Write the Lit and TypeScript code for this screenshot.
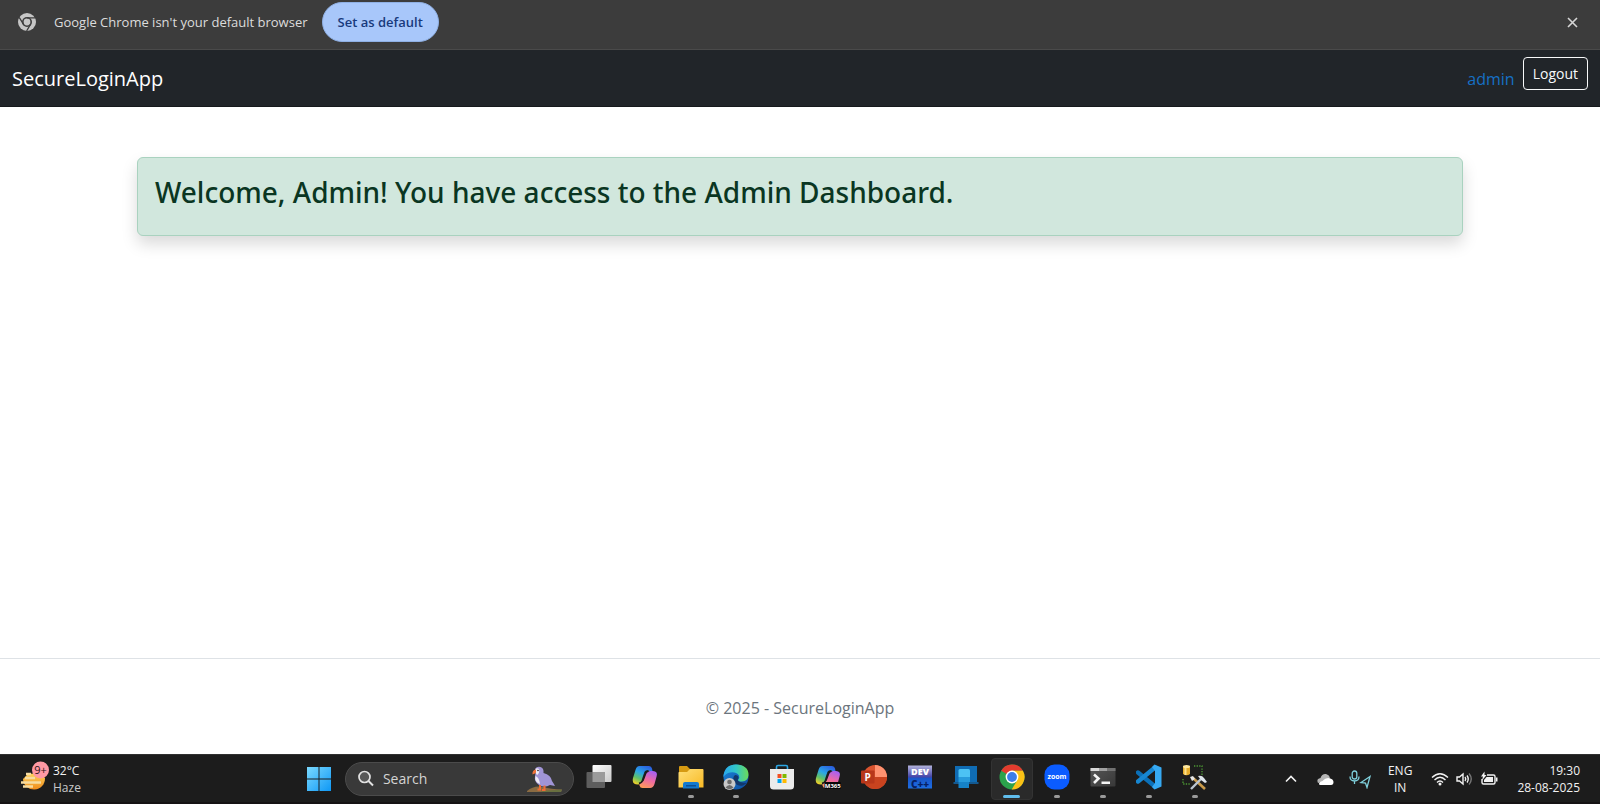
import { LitElement, html, css, svg, nothing, TemplateResult } from "lit";
import { customElement, property } from "lit/decorators.js";
import { classMap } from "lit/directives/class-map.js";

const reset = css`
  * {
    box-sizing: border-box;
  }
  button,
  input {
    font: inherit;
    margin: 0;
  }
  svg {
    display: block;
  }
`;

@customElement("default-browser-bar")
class DefaultBrowserBar extends LitElement {
  static styles = [
    reset,
    css`
      :host {
        display: block;
        background: #3c3c3c;
        color: #dcdcdc;
        border-bottom: 1px solid #4a4a4a;
      }
      .bar {
        display: flex;
        align-items: center;
        padding: 2px 18px 7px;
        font-size: 13px;
        line-height: 20px;
      }
      .message {
        margin: 0 14px 0 18px;
      }
      .set {
        height: 40px;
        padding: 0 15px;
        border: 1px solid #8fb0e4;
        border-radius: 20px;
        background: #a8c7fa;
        color: #183a7c;
        font-weight: 600;
      }
      .close {
        margin-left: auto;
        padding: 4px;
        border: 0;
        background: none;
        color: #d6d6d6;
      }
    `,
  ];
  render() {
    return html`<div class="bar">
      <svg width="18" height="18" viewBox="0 0 18 18" aria-hidden="true">
        <circle cx="9" cy="9" r="9" fill="#c6c6c6" />
        <circle cx="9" cy="9" r="5" fill="#3c3c3c" />
        <circle cx="9" cy="9" r="3.400" fill="#c6c6c6" />
        <path d="M9 4.800H17.400M5.400 11.200L1.200 4.400M12.600 11.200L8.600 18" stroke="#3c3c3c" stroke-width="1.300" />
      </svg>
      <span class="message">Google Chrome isn't your default browser</span>
      <button class="set" type="button">Set as default</button>
      <button class="close" type="button" aria-label="Close">
        <svg width="11" height="11" viewBox="0 0 11 11">
          <path d="M1 1L10 10M10 1L1 10" stroke="currentColor" stroke-width="1.600" />
        </svg>
      </button>
    </div>`;
  }
}

@customElement("site-nav")
class SiteNav extends LitElement {
  static styles = [
    reset,
    css`
      :host {
        display: block;
        background: #212529;
      }
      .nav {
        display: flex;
        align-items: flex-start;
        height: 57px;
        padding: 7px 12px 0;
        border-bottom: 1px solid #16191c;
      }
      a {
        text-decoration: none;
      }
      .brand {
        margin-right: auto;
        padding-top: 7px;
        color: #fff;
        font-size: 20px;
        line-height: 30px;
      }
      .user {
        padding: 9px 8px 0 0;
        color: #1670c4;
        font-size: 16px;
        line-height: 26px;
      }
      .logout {
        height: 33px;
        padding: 0 9px;
        border: 1px solid #f8f9fa;
        border-radius: 4px;
        background: none;
        color: #f8f9fa;
        font-size: 14px;
        line-height: 22px;
      }
    `,
  ];
  render() {
    return html`<nav class="nav">
      <a class="brand" href="#">SecureLoginApp</a>
      <a class="user" href="#">admin</a>
      <button class="logout" type="button">Logout</button>
    </nav>`;
  }
}

type App = { name: string; art: TemplateResult; running?: boolean; active?: boolean };

const copilot = svg`
  <path d="M7.500 2H17Q19.500 2 20 4.500L20.500 7H15.500Q13.500 7 13 9L10.500 17Q9.500 20.500 6 20.500Q-0.500 20.500 1 14L3.500 6Q4.500 2 7.500 2Z" fill="url(#cpa)"/>
  <path d="M18 24H10.500Q8 24 7.500 21.500L7 19Q10.500 19.500 12 16L14.500 9.500Q15.300 7 18 7H21Q26 7.500 24.700 12L22.500 20Q21.300 24 18 24Z" fill="url(#cpb)"/>
  <path d="M16.500 7Q13.500 7 12.800 9.500L10.500 16.500Q9.500 19 7 19.500" fill="none" stroke="#1c1c1c" stroke-width="1.800"/>`;
const copilotDefs = svg`
  <defs>
    <linearGradient id="cpa" x1="0.7" y1="0" x2="0.2" y2="1"><stop stop-color="#2b62e0"/><stop offset="0.4" stop-color="#2aa5e8"/><stop offset="0.7" stop-color="#5fc26a"/><stop offset="1" stop-color="#f4cf26"/></linearGradient>
    <linearGradient id="cpb" x1="0.7" y1="0" x2="0.3" y2="1"><stop stop-color="#a660f2"/><stop offset="0.5" stop-color="#ee6aa4"/><stop offset="1" stop-color="#ff9a5a"/></linearGradient>
  </defs>`;

const APPS: App[] = [
  {
    name: "Task View",
    art: svg`<defs><linearGradient id="tv" x2="1" y2="1"><stop stop-color="#fff"/><stop offset="1" stop-color="#c9c9c9"/></linearGradient></defs>
      <rect x="6.500" y="1" width="19" height="17" rx="1" fill="url(#tv)"/>
      <rect x="0.500" y="8" width="18.500" height="16" rx="1" fill="#5e5e5e"/>
      <path d="M6.500 8H19V18H6.500Z" fill="#9b9b9b"/>`,
  },
  { name: "Copilot", art: svg`${copilotDefs}${copilot}` },
  {
    name: "File Explorer",
    running: true,
    art: svg`<defs><linearGradient id="fe" x2="1" y2="1"><stop stop-color="#ffe07a"/><stop offset="1" stop-color="#f8b924"/></linearGradient></defs>
      <path d="M1 3Q1 2 2 2H9L12 5H24Q25 5 25 6V12H1Z" fill="#d69a12"/>
      <path d="M1 8H9L12 5H24.500Q25.500 5 25.500 6V23.500H0.500V8.500Z" fill="url(#fe)"/>
      <path d="M5 24.500V20Q5 18 7 18H19Q21 18 21 20V24.500Z" fill="#1379cf"/>
      <rect x="8" y="21" width="10" height="1.500" fill="#0b4f94"/>`,
  },
  {
    name: "Microsoft Edge",
    running: true,
    art: svg`<defs>
        <linearGradient id="eg" x2="1"><stop stop-color="#2aa7ee"/><stop offset="0.5" stop-color="#32c7c8"/><stop offset="1" stop-color="#6cdc58"/></linearGradient>
        <linearGradient id="eb" x2="1" y2="1"><stop stop-color="#1c86dc"/><stop offset="1" stop-color="#0c4a9c"/></linearGradient>
      </defs>
      <circle cx="13" cy="13" r="12.500" fill="url(#eb)"/>
      <path d="M0.500 11.500Q2 0.500 13 0.500Q25.500 1 25.500 11Q25 17 19 17.500Q15 17.500 15 16Q17 14 16 11.500Q13 7.500 7 8.500Q3 9 0.500 13Z" fill="url(#eg)"/>
      <path d="M12 11Q9 14 11 18Q14 22.500 20 21.500L24 19Q20 19 17 18Q13.500 16.500 15.500 14Q15.500 11 12 11Z" fill="#12386c"/>
      <circle cx="6.500" cy="20" r="6" fill="#c8c8c8"/><circle cx="6.500" cy="18" r="2.300" fill="#6b6b6b"/><path d="M2.500 23.500Q6.500 18.500 10.500 23.500Q6.500 27 2.500 23.500Z" fill="#6b6b6b"/>`,
  },
  {
    name: "Microsoft Store",
    art: svg`<path d="M7.500 6V3Q7.500 1.500 9 1.500H17Q18.500 1.500 18.500 3V6" fill="none" stroke="#2ba6e3" stroke-width="1.600"/>
      <path d="M1 5H25V22Q25 25.500 21.500 25.500H4.500Q1 25.500 1 22Z" fill="#ececec"/>
      <path d="M8.500 10H12.500V14H8.500Z" fill="#f25022"/><path d="M13.500 10H17.500V14H13.500Z" fill="#7fba00"/>
      <path d="M8.500 15H12.500V19H8.500Z" fill="#00a4ef"/><path d="M13.500 15H17.500V19H13.500Z" fill="#ffb900"/>`,
  },
  {
    name: "Microsoft 365 Copilot",
    art: svg`${copilotDefs}${copilot}<rect x="9.500" y="18" width="16.500" height="7" rx="1" fill="#080808"/>
      <text x="17.700" y="23.700" font-size="6" font-weight="700" text-anchor="middle" fill="#fff">M365</text>`,
  },
  {
    name: "PowerPoint",
    art: svg`<circle cx="14" cy="13" r="12" fill="#d9532f"/>
      <path d="M14 1A12 12 0 0 1 26 13H14Z" fill="#ff9270"/><path d="M2 13H26A12 12 0 0 1 2 13Z" fill="#c9431f"/>
      <rect x="0" y="6.500" width="13.500" height="13" rx="1" fill="#b8371a"/>
      <text x="6.700" y="16.600" font-size="10" font-weight="700" text-anchor="middle" fill="#fff">P</text>`,
  },
  {
    name: "Dev-C++",
    art: svg`<defs><linearGradient id="dv" x2="0" y2="1"><stop stop-color="#b3b3dc"/><stop offset="0.500" stop-color="#4545a8"/><stop offset="0.550" stop-color="#1a56c8"/><stop offset="1" stop-color="#1d6ee4"/></linearGradient></defs>
      <rect x="1" y="1.500" width="24" height="23" fill="url(#dv)"/>
      <text x="13" y="10.500" font-size="9" font-weight="800" text-anchor="middle" fill="#fff">DEV</text>
      <text x="13" y="24" font-size="10" font-weight="800" text-anchor="middle" fill="#071f63">C++</text>`,
  },
  {
    name: "Remote Desktop",
    art: svg`<rect x="2" y="2" width="22" height="16" fill="#0f6cb4"/><path d="M0.500 18H25.500V20H0.500Z" fill="#14598f"/>
      <path d="M5.500 6.500Q5.500 5 7 5H15.500Q17 5 17 6.500V13H5.500Z" fill="#4cc2f4"/>
      <path d="M5.500 13H17V18H5.500Z" fill="#279bdc"/><path d="M5.500 18H16V24H5.500Z" fill="#1683c8"/>`,
  },
  {
    name: "Google Chrome",
    running: true,
    active: true,
    art: svg`<circle cx="13" cy="13" r="12.500" fill="#2ba24c"/>
      <path d="M13 13L2.200 6.700A12.500 12.500 0 0 1 23.900 6.800H13Z" fill="#e33b2e"/>
      <path d="M13 6.800H23.900A12.500 12.500 0 0 1 12.700 25.500L18.400 16Z" fill="#fbc116"/>
      <circle cx="13" cy="13" r="6.400" fill="#fff"/><circle cx="13" cy="13" r="4.900" fill="#3b7de9"/>`,
  },
  {
    name: "Zoom",
    running: true,
    art: svg`<rect x="0.500" y="0.500" width="25" height="25" rx="10" fill="#0b5cff"/>
      <text x="13" y="15" font-size="7" font-weight="700" text-anchor="middle" fill="#fff">zoom</text>`,
  },
  {
    name: "Terminal",
    running: true,
    art: svg`<defs><linearGradient id="tm" x2="1" y2="1"><stop stop-color="#565656"/><stop offset="1" stop-color="#383838"/></linearGradient></defs>
      <rect x="0.500" y="4" width="25" height="18.500" rx="1" fill="url(#tm)"/>
      <path d="M0.500 4H9V7H0.500Z" fill="#d8d8d8"/><path d="M9 4H17V7H9Z" fill="#a0a0a0"/><path d="M17 4H25.500V7H17Z" fill="#727272"/>
      <path d="M4 10.500L8.500 14.500L4 19" fill="none" stroke="#f4f4f4" stroke-width="2.600"/><path d="M11.500 17.500H20V20H11.500Z" fill="#f4f4f4"/>`,
  },
  {
    name: "Visual Studio Code",
    running: true,
    art: svg`<path d="M2 8.500L19 22.500" stroke="#0b70b8" stroke-width="4.400" stroke-linecap="round"/>
      <path d="M2 17.500L19 3.500" stroke="#1787d2" stroke-width="4.400" stroke-linecap="round"/>
      <path d="M18.500 0.500L25.500 3.500V22.500L18.500 25.500L16 23L19 19V7L16 3Z" fill="#36a9f2"/>`,
  },
  {
    name: "SQL Server Management Studio",
    running: true,
    art: svg`<path d="M1 2.500H8V10Q4.500 12.500 1 10Z" fill="#e6ad2c"/><path d="M2.500 3H4.500V11H2.500Z" fill="#fbe08a"/><ellipse cx="4.500" cy="2.500" rx="3.500" ry="1.500" fill="#ffe9a0"/>
      <path d="M12 2H20V12M1 15V20H8" fill="none" stroke="#4d9a34" stroke-width="1.300" stroke-dasharray="1.300 1.300"/>
      <path d="M11 14L23 25" stroke="#c99a4a" stroke-width="2.600"/><path d="M9 25L20 14" stroke="#b9c4d0" stroke-width="2.400"/>
      <path d="M8 13L11 12L13 15L10 17Z" fill="#e6e6e6"/><path d="M16 12Q20 11 22 14L25 18L23 19L19 16Z" fill="#dfe5ec"/>`,
  },
];

@customElement("task-bar")
class TaskBar extends LitElement {
  @property({ attribute: false }) apps: App[] = APPS;
  static styles = [
    reset,
    css`
      :host {
        display: block;
        background: #1c1c1c;
        color: #f2f2f2;
        font-size: 12px;
        line-height: 17px;
      }
      .bar {
        display: flex;
        align-items: stretch;
        height: 50px;
        padding: 0 20px;
        border-top: 1px solid #303030;
        border-bottom: 2px solid #151214;
      }
      button {
        border: 0;
        padding: 0;
        background: none;
        color: inherit;
      }
      .weather {
        display: flex;
        align-items: center;
        gap: 4px;
        text-align: left;
        margin-right: auto;
      }
      .haze {
        color: #c9c9c9;
      }
      .middle {
        display: flex;
        align-items: center;
        margin-right: 65px;
      }
      .start {
        margin-right: 13px;
      }
      .search {
        display: flex;
        align-items: center;
        width: 229px;
        height: 34px;
        padding: 0 11px;
        border: 1px solid #4b4b4b;
        border-radius: 17px;
        background: #393939;
      }
      .field {
        flex: 1;
        min-width: 0;
        margin-left: 9px;
        padding: 0;
        border: 0;
        outline: 0;
        background: none;
        color: #d4d4d4;
        font-size: 14px;
        line-height: 20px;
      }
      .field::placeholder {
        color: #d4d4d4;
        opacity: 1;
      }
      .apps {
        display: grid;
        grid-auto-flow: column;
        grid-auto-columns: 1fr;
        width: 642px;
        margin-left: 2px;
      }
      .app {
        display: grid;
        grid-template-rows: 36px 3px;
        justify-items: center;
        align-items: center;
        justify-self: center;
        width: 42px;
        height: 42px;
        border: 1px solid transparent;
        border-radius: 4px;
      }
      .active {
        background: #2a2a2a;
        border-color: #333;
      }
      .mark {
        width: 6px;
        height: 3px;
        border-radius: 2px;
        background: #9a9a9a;
      }
      .active .mark {
        width: 17px;
        background: #60bdec;
      }
      .tray {
        display: flex;
        align-items: center;
      }
      .onedrive {
        margin-left: 18px;
      }
      .mic {
        margin-left: 15px;
      }
      .lang {
        margin-left: 16px;
        text-align: center;
        font-size: 12px;
      }
      .status {
        display: flex;
        align-items: center;
        gap: 7px;
        margin: 0 19px 0 19px;
      }
      .clock {
        text-align: right;
      }
    `,
  ];
  render() {
    return html`<footer class="bar">
      <button class="weather" type="button">
        <svg width="29" height="36" viewBox="0 0 29 36" aria-hidden="true">
          <defs><linearGradient id="sun" x2="0" y2="1"><stop stop-color="#ffd45c" /><stop offset="1" stop-color="#ef8b1b" /></linearGradient></defs>
          <path d="M3 18A11 11 0 0 0 25 17L20 12L8 13Z" fill="url(#sun)" />
          <path d="M6 13H11M5 17H15M1 21.500H21M3 25.500H13" stroke="#f6dca0" stroke-width="2.500" />
          <circle cx="20.500" cy="9" r="8.500" fill="#ff99a4" />
          <text x="20.500" y="13" font-size="11" text-anchor="middle" fill="#2b1215">9+</text>
        </svg>
        <span>32°C<br /><span class="haze">Haze</span></span>
      </button>
      <div class="middle">
        <button class="start" type="button" aria-label="Start">
          <svg width="26" height="26" viewBox="0 0 26 26">
            <defs><linearGradient id="win" gradientUnits="userSpaceOnUse" x2="26" y2="26"><stop stop-color="#7fdcff" /><stop offset="1" stop-color="#0a95f5" /></linearGradient></defs>
            <path d="M1 1H12.500V12.500H1ZM13.500 1H25V12.500H13.500ZM1 13.500H12.500V25H1ZM13.500 13.500H25V25H13.500Z" fill="url(#win)" />
          </svg>
        </button>
        <label class="search">
          <svg width="17" height="17" viewBox="0 0 17 17" aria-hidden="true">
            <circle cx="7.500" cy="7" r="5.500" fill="#585858" stroke="#e2e2e2" stroke-width="1.700" />
            <path d="M11.500 11L16 15.500" stroke="#e2e2e2" stroke-width="2" />
          </svg>
          <input class="field" type="text" placeholder="Search" aria-label="Search" />
          <svg width="36" height="28" viewBox="0 0 36 28" aria-hidden="true">
            <path d="M1 26Q8 20 17 22Q25 24 36 24.500L35 27H1Z" fill="#8a6b42" />
            <path d="M17 26Q26 25 36 24.500L35 27H15Z" fill="#687040" />
            <path d="M9 4Q11 1 14.500 2Q18 3 17.500 8Q25 10 26 16Q28 19 29 21L24 20Q18 23 13 20Q8 17 9 11Q10 8 9 4Z" fill="#a094d6" />
            <path d="M9.500 4Q11 2.500 13 4Q14 8 11 10Q9 8 9.500 4ZM9.500 11Q13 12 14 19Q8 17 9.500 11Z" fill="#eeeaf6" />
            <path d="M10 4.500Q6 5 6.500 9.500L10 8Z" fill="#f0733c" />
            <circle cx="12" cy="5.500" r="0.800" fill="#222" />
            <path d="M14 20V24.500H11.500M18.500 20.500V25H16" stroke="#ef6b34" stroke-width="2" fill="none" />
          </svg>
        </label>
        <div class="apps">
          ${this.apps.map(
            (app) => html`<button class=${classMap({ app: true, active: !!app.active })} type="button" aria-label=${app.name}>
              <svg width="26" height="26" viewBox="0 0 26 26">${app.art}</svg>
              ${app.running ? html`<span class="mark"></span>` : nothing}
            </button>`
          )}
        </div>
      </div>
      <div class="tray">
        <button type="button" aria-label="Show hidden icons">
          <svg width="16" height="16" viewBox="0 0 16 16"><path d="M3 10.500L8 5.500L13 10.500" fill="none" stroke="#f2f2f2" stroke-width="1.600" /></svg>
        </button>
        <button class="onedrive" type="button" aria-label="OneDrive">
          <svg width="17" height="16" viewBox="0 0 17 16">
            <path d="M1 12Q-1 8 3.500 7Q5 2.500 9 3Q12 3.500 13 6.500L8 10Z" fill="#b4b4b4" />
            <path d="M2 13Q2 11 5.500 10Q8 7 12 7Q16.500 8 16.500 11Q16.500 14 14 14H3.500Q2 14 2 13Z" fill="#fff" />
          </svg>
        </button>
        <button class="mic" type="button" aria-label="Microphone and location in use">
          <svg width="23" height="20" viewBox="0 0 23 20">
            <g fill="none" stroke="#7fd0dc" stroke-width="1.300">
              <rect x="3.200" y="2" width="4.600" height="8" rx="2.300" />
              <path d="M1 7.500Q1 12 5.500 12Q10 12 10 7.500M5.500 12V15" />
              <path d="M21 7.500L12 13.500L16.500 14L18 18.500Z" />
            </g>
          </svg>
        </button>
        <button class="lang" type="button">ENG<br />IN</button>
        <button class="status" type="button" aria-label="Network, volume and battery">
          <svg width="18" height="16" viewBox="0 0 18 16">
            <g fill="none" stroke="#f2f2f2" stroke-width="1.400">
              <path d="M1 6.500Q9 -1 17 6.500M3.500 9Q9 3.500 14.500 9M6 11.500Q9 8.500 12 11.500" />
            </g>
            <circle cx="9" cy="13" r="1.500" fill="#f2f2f2" />
          </svg>
          <svg width="17" height="16" viewBox="0 0 17 16">
            <g fill="none" stroke="#f2f2f2" stroke-width="1.400">
              <path d="M1 6H3.500L7 3V13L3.500 10H1Z" />
              <path d="M9 6Q10.500 8 9 10M11 4.500Q13.500 8 11 11.500" />
              <path d="M13 2.500Q17.500 8 13 13.500" stroke="#777" />
            </g>
          </svg>
          <svg width="18" height="16" viewBox="0 0 18 16">
            <path d="M7 4H13.500Q15 4 15 5.500V11.500Q15 13 13.500 13H3.500Q2 13 2 11.500V8" fill="none" stroke="#f2f2f2" stroke-width="1.400" />
            <path d="M6.500 6H13V11H4V9Z" fill="#f2f2f2" /><path d="M16 6.500H17.500V10.500H16Z" fill="#f2f2f2" />
            <path d="M4.500 0.500L1 5.500H3L2 9.500L6.500 4H4.500Z" fill="#f2f2f2" />
          </svg>
        </button>
        <button class="clock" type="button">19:30<br />28-08-2025</button>
      </div>
    </footer>`;
  }
}

@customElement("app-root")
class AppRoot extends LitElement {
  static styles = [
    reset,
    css`
      :host {
        display: flex;
        flex-direction: column;
        min-height: 100vh;
        background: #fff;
        font-family: "Segoe UI", "Open Sans", "Noto Sans", sans-serif;
      }
      .main {
        flex: 1;
        width: 100%;
        max-width: 1350px;
        margin: 0 auto;
        padding: 50px 12px;
      }
      .alert {
        padding: 16px 17px;
        border: 1px solid #a9d2bf;
        border-radius: 6px;
        background: #d1e7dd;
        color: #0a3622;
        box-shadow: 0 8px 16px rgba(0, 0, 0, 0.15);
      }
      .title {
        margin: 0 0 8px;
        font-family: "Segoe UI", "Noto Sans", "Open Sans", sans-serif;
        font-size: 28px;
        font-weight: 500;
        line-height: 37px;
      }
      .foot {
        padding: 36px 12px 33px;
        border-top: 1px solid #dee2e6;
        color: #6c757d;
        font-size: 16px;
        line-height: 26px;
        text-align: center;
      }
    `,
  ];
  render() {
    return html`
      <default-browser-bar></default-browser-bar>
      <site-nav></site-nav>
      <main class="main">
        <div class="alert" role="alert"><h2 class="title">Welcome, Admin! You have access to the Admin Dashboard.</h2></div>
      </main>
      <div class="foot">© 2025 - SecureLoginApp</div>
      <task-bar></task-bar>
    `;
  }
}
